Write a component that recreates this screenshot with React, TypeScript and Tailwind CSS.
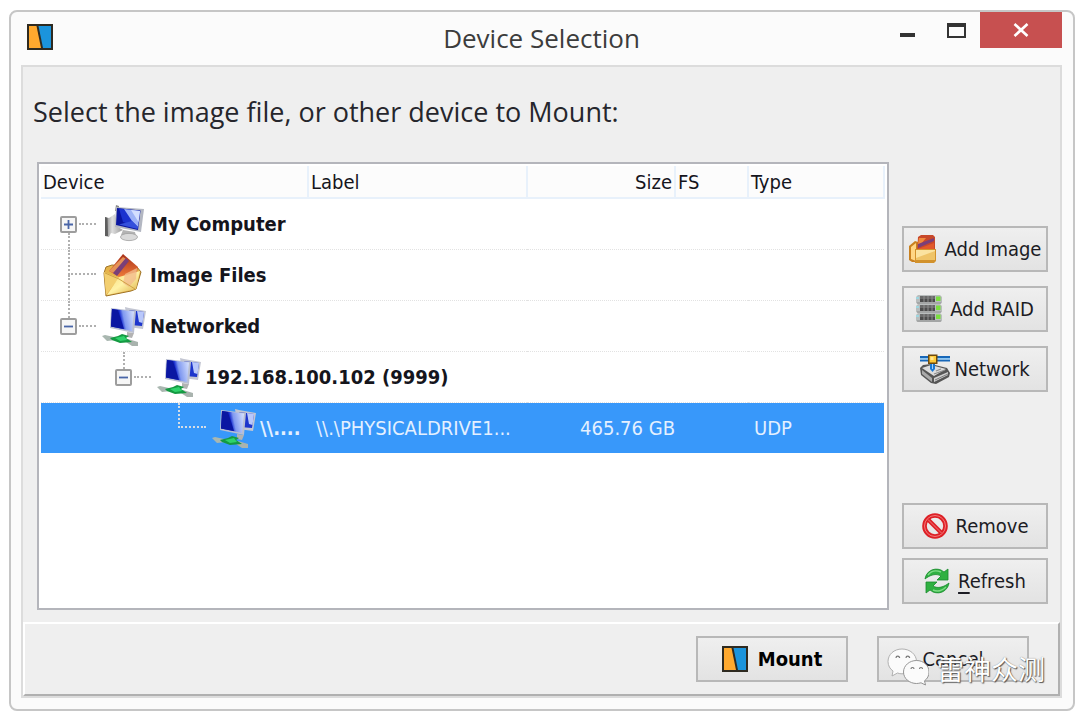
import React, { useState } from "react";

function LogoIcon({ className }: { className?: string }) {
  return (
    <svg viewBox="0 0 26 26" className={className} aria-hidden="true">
      <rect x="0" y="0" width="26" height="26" fill="#2e2a20" />
      <path d="M2 2H9.5L14 24H2Z" fill="#ffa92e" />
      <path d="M11.5 2H24V24H16Z" fill="#1b94dc" />
    </svg>
  );
}

function IconGradients({ id }: { id: string }) {
  return (
    <defs>
      <linearGradient id={id + "-screen"} x1="0" y1="0.2" x2="1" y2="0">
        <stop offset="0" stopColor="#0a16a8" />
        <stop offset="0.36" stopColor="#1a2fd0" />
        <stop offset="0.5" stopColor="#7f98f0" />
        <stop offset="1" stopColor="#dbe5ff" />
      </linearGradient>
      <linearGradient id={id + "-metal"} x1="0" y1="0" x2="1" y2="0">
        <stop offset="0" stopColor="#7c7c7c" />
        <stop offset="0.4" stopColor="#dedede" />
        <stop offset="1" stopColor="#9a9a9a" />
      </linearGradient>
    </defs>
  );
}

function ComputerIcon() {
  return (
    <svg viewBox="0 0 42 42" className="size-[42px]" aria-hidden="true">
      <IconGradients id="pc" />
      <path d="M2 14L6 15L12 11L15 24L20 27L12 31L8 30L6 34L2 33Z" fill="url(#pc-metal)" />
      <path d="M2 14L4.500 15L5 33L2 33Z" fill="#5e5e5e" />
      <path d="M13 2L16 3V8H12Z" fill="#8a8a8a" />
      <path d="M20 27L32 29L33 33L18 32Z" fill="#b4b4b4" />
      <ellipse cx="26" cy="34" rx="8.500" ry="3.600" fill="#dadada" stroke="#a0a0a0" strokeWidth="0.800" />
      <path d="M13 4L41 6L38 29L12 24Z" fill="#b3b7c2" />
      <path d="M14 5L37.500 7.500L35 27L13 22Z" fill="#0a16a0" />
      <path d="M16 5.500L37 8L34.500 24L20 19Z" fill="#1b33cf" />
      <path d="M21 6L37 8L35 24L29 18Z" fill="#9db2f7" />
      <path d="M28 7L37 8L35.500 19Z" fill="#d3deff" />
      <path d="M16 21.500L29 18L35 24L34.500 26Z" fill="#3450dc" />
    </svg>
  );
}

function NetworkedIcon({ id }: { id: string }) {
  return (
    <svg viewBox="0 0 44 42" className="h-[42px] w-11" aria-hidden="true">
      <IconGradients id={id} />
      <path d="M23 2L27 3L44 6L41 24L26 22Z" fill="#c3c6d2" />
      <path d="M27 5L42 7L40 21L28 20Z" fill="#1d35cc" />
      <path d="M35 6L42 7L40.500 18L37 17Z" fill="#b9c8fb" />
      <path d="M9 3L34 6L32 28L8 23Z" fill="#b9bfd2" />
      <path d="M10 4L32 6.500L30 26L9 21.500Z" fill={"url(#" + id + "-screen)"} />
      <path d="M10 4L16 5L22 24L9 21.500Z" fill="#0a16a2" />
      <path d="M25 27L32 28L30 33L25 32Z" fill="#b3b3b3" />
      <path d="M0 31L3 30L12 32L14 35L5 36Z" fill="#a9b7b0" />
      <path d="M26 34L36 37L36 41L30 41L24 37Z" fill="#a9b3ae" />
      <path d="M8 33L16 31L20 29L27 31L24 33L30 37L18 38L10 35Z" fill="#149a42" />
      <path d="M13 33L22 31L25 35L18 36Z" fill="#2fd36b" />
    </svg>
  );
}

function ImageFilesIcon() {
  return (
    <svg viewBox="0 0 42 44" className="h-11 w-[42px]" aria-hidden="true">
      <defs>
        <linearGradient id="envelope" x1="0" y1="0" x2="1" y2="1">
          <stop offset="0" stopColor="#f5d678" />
          <stop offset="0.5" stopColor="#fff2a6" />
          <stop offset="1" stopColor="#d9a83e" />
        </linearGradient>
        <linearGradient id="photo" x1="0" y1="0" x2="0" y2="1">
          <stop offset="0" stopColor="#a83018" />
          <stop offset="1" stopColor="#ee7a3a" />
        </linearGradient>
      </defs>
      <path d="M3 14L9 12L34 14L38 19L33 36L28 38L3 43L1 20Z" fill="#e5b44a" stroke="#a07428" strokeWidth="1" />
      <path d="M20 1L35 14L33 24L16 24L6 18Z" fill="url(#photo)" />
      <path d="M20 4L23 6L11 20L6 18Z" fill="#e59258" />
      <path d="M23 5L26 8L14 23L10 20Z" fill="#7a3f78" />
      <path d="M1 19L16 25L3 42Z" fill="#f3cf70" />
      <path d="M16 24L37 18L33 36L4 42Z" fill="url(#envelope)" />
      <path d="M22 21L34 15L33 26L26 34L20 30Z" fill="#f2bb8c" opacity="0.8" />
      <path d="M2 20L16 26L32 36" fill="none" stroke="#d0a244" strokeWidth="1" />
    </svg>
  );
}

function AddImageIcon() {
  return (
    <svg viewBox="0 0 28 28" className="size-7" aria-hidden="true">
      <path d="M0 11L6 6L9 7V27H3L0 25Z" fill="#c98120" />
      <path d="M2 12L7 8V26L2 24Z" fill="#ffd684" />
      <path d="M9 2L12 0H24L26 2V17H8Z" fill="#c8482a" />
      <path d="M10 3H17L12 9H9Z" fill="#f08b3c" />
      <path d="M9 9L25 3V6L9 13Z" fill="#7b3f79" />
      <path d="M9 14L25 8V16H9Z" fill="#e25a2b" />
      <path d="M6 14H27V26L25 28H6Z" fill="#d2922c" />
      <path d="M7 15H26V25H7Z" fill="#fbe3a0" />
      <path d="M7 23L26 16V25H7Z" fill="#efc468" />
    </svg>
  );
}

function RaidIcon() {
  return (
    <svg viewBox="0 0 26 28" className="h-7 w-[26px]" aria-hidden="true">
      {[0, 9, 18].map((y) => (
        <g key={y} transform={"translate(0 " + y + ")"}>
          <path d="M2 0H24L26 2V8L24 9H2L0 8V2Z" fill="#b9bdbd" />
          <path d="M4 1H19V7H4Z" fill="#6a6a6a" />
          <path d="M4 4H19V7H4Z" fill="#4c4c4c" />
          <path d="M8 1V7M12 1V7M16 1V7" stroke="#8f8f8f" strokeWidth="1" />
          <path d="M1 8H25" stroke="#8e8e8e" strokeWidth="1" />
          <path d="M0 3H3" stroke="#9ed6e0" strokeWidth="2" />
          <rect x="20" y="1.500" width="4.500" height="4.500" fill="#7ade3e" />
        </g>
      ))}
    </svg>
  );
}

function NetworkDriveIcon() {
  return (
    <svg viewBox="0 0 30 30" className="size-[30px]" aria-hidden="true">
      <path d="M0 14L3 11L11 10L27 14L30 19L29 23L16 30L11 29L1 21Z" fill="#555" />
      <path d="M2 14L11 11L26 15L14 22Z" fill="#dcdcdc" />
      <path d="M2 16L12 24V28L2 20Z" fill="#a9a9a9" />
      <path d="M14 24L28 18V21L14 28Z" fill="#cfcfcf" />
      <path d="M15 26L28 20" stroke="#7b7b7b" strokeWidth="1" />
      <path d="M16 17L21 15M14 20L25 16" stroke="#8c8c8c" strokeWidth="1.200" />
      <path d="M0 2H30V4H0Z" fill="#1767b8" />
      <path d="M0 5.500H30V7.500H0Z" fill="#1767b8" />
      <path d="M0 4H30V5.500H0Z" fill="#8cc6f2" />
      <path d="M10 8H15V15L12.500 18L10 15Z" fill="#1c79d4" />
      <path d="M12 9H13V15H12Z" fill="#9fd2fa" />
      <rect x="8" y="0.500" width="9.500" height="9.500" fill="#6f4a0c" />
      <rect x="9.500" y="2" width="6.500" height="6.500" fill="#ffcb3b" />
      <rect x="10.500" y="3" width="3" height="3" fill="#ffe796" />
    </svg>
  );
}

function RemoveIcon() {
  return (
    <svg viewBox="0 0 26 26" className="size-[26px]" fill="none" aria-hidden="true">
      <circle cx="13" cy="13" r="10.500" stroke="#dd2026" strokeWidth="4.600" />
      <path d="M5.500 6L20 20.500" stroke="#dd2026" strokeWidth="4.200" />
      <circle cx="13" cy="13" r="10.500" stroke="#f4797b" strokeWidth="1" />
      <path d="M6 6.500L19.500 20" stroke="#f4797b" strokeWidth="1" />
    </svg>
  );
}

function RefreshIcon() {
  return (
    <svg viewBox="0 0 26 26" className="size-[26px]" aria-hidden="true">
      <path d="M1 11C2 4 9 -1 17 2L20 4L24 1V12H13L17 8C12 5 6 7 1 11Z" fill="#2fb041" stroke="#188a2c" strokeWidth="0.800" />
      <path d="M25 15C24 22 17 27 9 24L6 22L2 25V14H13L9 18C14 21 20 19 25 15Z" fill="#2fb041" stroke="#188a2c" strokeWidth="0.800" />
      <path d="M4 7C7 3 12 2 17 4" fill="none" stroke="#7fdb86" strokeWidth="1.400" />
      <path d="M9 22C14 24 19 22 22 19" fill="none" stroke="#7fdb86" strokeWidth="1.400" />
    </svg>
  );
}

function ChatBubblesIcon() {
  return (
    <svg viewBox="0 0 42 38" className="h-[38px] w-[42px]" aria-hidden="true">
      <path d="M15 1C7 1 1 6.500 1 13.500C1 17.500 3 21 6 23L5 28L10.500 25C12 25.600 13.500 25.800 15 25.800C23 25.800 29.500 20.500 29.500 13.500C29.500 6.500 23 1 15 1Z" fill="#fbfbfb" stroke="#a8a8a8" strokeWidth="0.900" />
      <path d="M29.500 12.500C22.500 12.500 16.500 17.500 16.500 24C16.500 30.500 22.500 35.500 29.500 35.500C31 35.500 32.500 35.200 34 34.800L38.500 37L37.500 32.800C40.500 30.800 42 27.500 42 24C42 17.500 36.500 12.500 29.500 12.500Z" fill="#fbfbfb" stroke="#8a8a8a" strokeWidth="0.900" />
      <path d="M9 10A1.800 1.800 0 0 1 12.600 10M19 10A1.800 1.800 0 0 1 22.600 10M24 21A1.500 1.500 0 0 1 27 21M32.500 21A1.500 1.500 0 0 1 35.500 21" fill="none" stroke="#777" strokeWidth="1.200" />
    </svg>
  );
}

type TreeRow = {
  name: string;
  level: number;
  icon: React.ReactNode;
  expander?: "plus" | "minus";
  above: boolean;
  below: boolean;
  label?: string;
  size?: string;
  type?: string;
};

const rows: TreeRow[] = [
  { name: "My Computer", level: 0, icon: <ComputerIcon />, expander: "plus", above: false, below: true },
  { name: "Image Files", level: 0, icon: <ImageFilesIcon />, above: true, below: true },
  { name: "Networked", level: 0, icon: <NetworkedIcon id="n1" />, expander: "minus", above: true, below: false },
  { name: "192.168.100.102 (9999)", level: 1, icon: <NetworkedIcon id="n2" />, expander: "minus", above: true, below: false },
  {
    name: "\\\\....",
    level: 2,
    icon: <NetworkedIcon id="n3" />,
    above: true,
    below: false,
    label: "\\\\.\\PHYSICALDRIVE1...",
    size: "465.76 GB",
    type: "UDP",
  },
];

const indents = ["pl-[19px]", "pl-[74px]", "pl-[129px]"];

function Branch({ row, active }: { row: TreeRow; active: boolean }) {
  const line = "border-dotted " + (active ? "border-[#d5dde6]" : "border-[#b0b0b0]");
  if (!row.expander) {
    return (
      <span className="flex h-full w-9 shrink-0 flex-col pl-2">
        <span className={"h-1/2 border-b-2 border-l-2 " + line} />
        <span className={"h-1/2 " + (row.below ? "border-l-2 " + line : "")} />
      </span>
    );
  }
  return (
    <span className="flex h-full w-9 shrink-0 items-center gap-0.5">
      <span className="flex h-full w-[17px] flex-col items-center">
        <span className={"flex-1 " + (row.above ? "border-l-2 " + line : "")} />
        <button
          aria-label={(row.expander === "plus" ? "Expand " : "Collapse ") + row.name}
          className="flex size-[17px] items-center justify-center rounded-xs border-2 border-[#9d9d9d] bg-[#f6f6f6]"
        >
          <svg viewBox="0 0 11 11" className="size-[11px]" aria-hidden="true">
            <path d={row.expander === "plus" ? "M1 5.500H10M5.500 1V10" : "M1 5.500H10"} stroke="#4a66a8" strokeWidth="1.800" />
          </svg>
        </button>
        <span className={"flex-1 " + (row.below ? "border-l-2 " + line : "")} />
      </span>
      <span className={"flex-1 border-t-2 " + line} />
    </span>
  );
}

function PushButton({ children, className }: { children: React.ReactNode; className?: string }) {
  return (
    <button
      className={
        "flex h-[46px] items-center justify-center border-2 border-[#b8b8b8] bg-linear-to-b from-[#efefef] to-[#e3e3e3] text-xl text-[#1c1c24] " +
        (className ?? "gap-2")
      }
    >
      {children}
    </button>
  );
}

export default function App() {
  const [selected, setSelected] = useState(4);
  return (
    <main className="bg-white pt-[10px] pr-[5px] pb-[6px] pl-[9px] font-['DejaVu_Sans_Condensed','DejaVu_Sans',sans-serif] text-[#15151c]">
      <section className="rounded-lg border-2 border-[#c6c6c6] bg-[#fbfbfb] pr-[11px] pb-[11px] pl-[10px]">
        <header className="grid h-[53px] grid-cols-[1fr_auto_1fr] items-start">
          <LogoIcon className="mt-3 ml-1.5 size-[26px]" />
          <h1 className="pt-2 font-['Open_Sans','Noto_Sans',sans-serif] text-[26px] leading-9 text-[#3c3c3c]">Device Selection</h1>
          <div className="flex justify-end">
            <button aria-label="Minimize" className="flex h-9 w-[50px] justify-center pt-[21px]">
              <span className="h-1 w-[15px] bg-[#333]" />
            </button>
            <button aria-label="Maximize" className="flex h-9 w-12 justify-center pt-[11px]">
              <span className="h-[15px] w-[19px] border-2 border-t-4 border-[#333]" />
            </button>
            <button aria-label="Close" className="flex h-9 w-[82px] items-center justify-center bg-[#c75050]">
              <svg viewBox="0 0 16 14" className="h-3.5 w-4" aria-hidden="true">
                <path d="M1.500 1L14.500 13M14.500 1L1.500 13" stroke="#fff" strokeWidth="2.600" />
              </svg>
            </button>
          </div>
        </header>

        <div className="border-2 border-[#dcdcdc] bg-[#efefef]">
          <div className="pt-6 pr-3 pb-3 pl-[14px]">
            <h2 className="-ml-1 font-['Open_Sans','Noto_Sans',sans-serif] text-[27px] leading-[42px] text-[#26262c]">
              Select the image file, or other device to Mount:
            </h2>
            <div className="mt-[29px] flex gap-[13px]">
              <div className="min-h-[448px] min-w-0 flex-1 border-2 border-[#b4b5bb] bg-white p-0.5">
                <table className="w-full table-fixed border-collapse text-xl">
                  <colgroup>
                    <col className="w-[267px]" />
                    <col className="w-[219px]" />
                    <col className="w-[148px]" />
                    <col className="w-[73px]" />
                    <col />
                  </colgroup>
                  <thead>
                    <tr className="h-8 border-b-2 border-[#e8f1fb] bg-[#fcfcfc] text-left leading-7">
                      <th className="border-r-2 border-[#e8f1fb] pl-0.5 font-normal">Device</th>
                      <th className="border-r-2 border-[#e8f1fb] pl-0.5 font-normal">Label</th>
                      <th className="border-r-2 border-[#e8f1fb] pr-0.5 text-right font-normal">Size</th>
                      <th className="border-r-2 border-[#e8f1fb] pl-0.5 font-normal">FS</th>
                      <th className="border-r-2 border-[#e8f1fb] pl-0.5 font-normal">Type</th>
                    </tr>
                  </thead>
                  <tbody>
                    {rows.map((row, i) => {
                      const active = i === selected;
                      return (
                        <tr
                          key={row.name}
                          onClick={() => setSelected(i)}
                          aria-selected={active}
                          className={active ? "bg-[#3898fa] text-[#e4f0ff]" : "border-b border-dotted border-[#e2e2e2]"}
                        >
                          <td colSpan={row.label ? 1 : 5} className="p-0">
                            <div className={"flex h-[50px] items-center overflow-hidden font-bold " + indents[row.level]}>
                              <Branch row={row} active={active} />
                              <span className="ml-1.5 flex w-11 shrink-0 justify-center">{row.icon}</span>
                              <span className="ml-1 whitespace-nowrap">{row.name}</span>
                            </div>
                          </td>
                          {row.label && (
                            <>
                              <td className="overflow-hidden p-0 pl-2 whitespace-nowrap">{row.label}</td>
                              <td className="p-0 text-right whitespace-nowrap">{row.size}</td>
                              <td className="p-0" />
                              <td className="p-0 pl-1.5">{row.type}</td>
                            </>
                          )}
                        </tr>
                      );
                    })}
                  </tbody>
                </table>
              </div>

              <div className="flex w-[146px] shrink-0 flex-col pt-16 pb-1.5">
                <div className="flex flex-col gap-[14px]">
                  <PushButton>
                    <AddImageIcon />
                    Add Image
                  </PushButton>
                  <PushButton>
                    <RaidIcon />
                    Add RAID
                  </PushButton>
                  <PushButton className="gap-1">
                    <NetworkDriveIcon />
                    Network
                  </PushButton>
                </div>
                <div className="mt-auto flex flex-col gap-[9px]">
                  <PushButton>
                    <RemoveIcon />
                    Remove
                  </PushButton>
                  <PushButton>
                    <RefreshIcon />
                    <span>
                      <span className="underline underline-offset-4">R</span>efresh
                    </span>
                  </PushButton>
                </div>
              </div>
            </div>
          </div>

          <footer className="flex justify-end gap-[29px] border-2 border-t-white border-r-[#b0b0b0] border-b-[#b0b0b0] border-l-white px-[29px] pt-3 pb-3">
            <PushButton className="w-[152px] gap-2.5 font-bold text-black">
              <LogoIcon className="size-[26px]" />
              Mount
            </PushButton>
            <div className="relative">
              <PushButton className="w-[152px]">Cancel</PushButton>
              <div className="pointer-events-none absolute top-3 left-2.5 flex items-center gap-2 whitespace-nowrap">
                <ChatBubblesIcon />
                <span className="pt-1 font-['Noto_Sans_CJK_SC',sans-serif] text-[27px] leading-8 text-white [text-shadow:1px_1px_1px_#555,0_0_1px_#777]">
                  雷神众测
                </span>
              </div>
            </div>
          </footer>
        </div>
      </section>
    </main>
  );
}
